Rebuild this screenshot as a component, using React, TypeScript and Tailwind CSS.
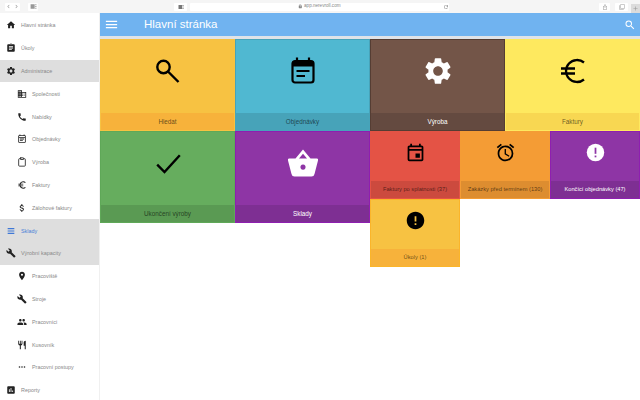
import React from 'react';
import {
  MdHome, MdAssignment, MdSettings, MdBusiness, MdCall, MdOutlineEventNote, MdEuroSymbol, MdAttachMoney,
  MdViewHeadline, MdBuild, MdPlace, MdPeople, MdRestaurant, MdMoreHoriz, MdAssessment, MdMenu, MdSearch,
  MdOutlineEvent, MdOutlineAccessAlarm, MdError, MdChevronLeft, MdChevronRight,
  MdRefresh, MdAdd, MdIosShare, MdFilterNone, MdViewSidebar, MdLock,
} from 'react-icons/md';
import { LuClipboard } from 'react-icons/lu';

const navItems = [
  { label: 'Hlavní stránka', icon: MdHome },
  { label: 'Úkoly', icon: MdAssignment },
  { label: 'Administrace', icon: MdSettings, active: true },
  { label: 'Společnosti', icon: MdBusiness, sub: true },
  { label: 'Nabídky', icon: MdCall, sub: true },
  { label: 'Objednávky', icon: MdOutlineEventNote, sub: true },
  { label: 'Výroba', icon: LuClipboard, sub: true },
  { label: 'Faktury', icon: MdEuroSymbol, sub: true },
  { label: 'Zálohové faktury', icon: MdAttachMoney, sub: true },
  { label: 'Sklady', icon: MdViewHeadline, active: true, blue: true },
  { label: 'Výrobní kapacity', icon: MdBuild, active: true },
  { label: 'Pracoviště', icon: MdPlace, sub: true },
  { label: 'Stroje', icon: MdBuild, sub: true },
  { label: 'Pracovníci', icon: MdPeople, sub: true },
  { label: 'Kusovník', icon: MdRestaurant, sub: true },
  { label: 'Pracovní postupy', icon: MdMoreHoriz, sub: true },
  { label: 'Reporty', icon: MdAssessment },
];

type IconProps = { className?: string };

const SearchIcon = ({ className }: IconProps) => (
  <svg viewBox="0 0 32 32" className={className} fill="none" stroke="currentColor" strokeWidth="2.4">
    <circle cx="11.5" cy="12" r="6.2" />
    <path d="M16 16.5 26.5 27" />
  </svg>
);

const NoteIcon = ({ className }: IconProps) => (
  <svg viewBox="0 0 32 32" className={className} fill="none" stroke="currentColor" strokeWidth="2.2">
    <rect x="5.5" y="6" width="21" height="21.5" rx="2.5" />
    <path d="M5.5 9h21" strokeWidth="5" />
    <path d="M10 2.5v5M22 2.5v5M9.5 16h13M9.5 21h8.5" />
  </svg>
);

const EuroIcon = ({ className }: IconProps) => (
  <svg viewBox="0 0 32 32" className={className} fill="none" stroke="currentColor" strokeWidth="2.3">
    <path d="M27 7.5A11 11 0 1 0 27 24.5M4 13.5h14M4 18.5h14" />
  </svg>
);

const CheckIcon = ({ className }: IconProps) => (
  <svg viewBox="0 0 32 32" className={className} fill="none" stroke="currentColor" strokeWidth="2.4">
    <path d="M5.2 17.7 12.5 25 27.8 8.3" />
  </svg>
);

const BasketIcon = ({ className }: IconProps) => (
  <svg viewBox="0 0 32 32" className={className} fill="currentColor" fillRule="evenodd">
    <path d="M16 2.5 23.5 11.5H30Q31.5 11.5 31 13.5L27.5 27Q27 29.5 24.5 29.5H7.5Q5 29.5 4.5 27L1 13.5Q.5 11.5 2 11.5H8.5ZM16 6.8 12 11.5H20ZM16 17.5a2.6 2.6 0 1 0 .01 0Z" />
  </svg>
);

const AlertWhite = ({ className }: IconProps) => (
  <svg viewBox="0 0 24 24" className={className}>
    <circle cx="12" cy="12" r="10" fill="#fff" />
    <rect x="11" y="6.5" width="2" height="7" fill="#8e35a5" />
    <rect x="11" y="15.5" width="2" height="2" fill="#8e35a5" />
  </svg>
);

type TileProps = {
  label: string;
  icon: React.ComponentType<IconProps>;
  bg: string;
  band: string;
  small?: boolean;
  light?: boolean;
};

const Tile = ({ label, icon: Icon, bg, band, small, light }: TileProps) => (
  <div className={`flex flex-col border-[0.5px] ${bg} ${small ? 'h-[68px] w-[90px]' : 'h-[92px] w-[135px]'}`}>
    <div className={`flex flex-1 items-center justify-center ${small ? 'pb-[9px]' : 'pb-[12px]'}`}>
      <Icon
        className={`${small ? 'h-[21px] w-[21px]' : 'h-[32px] w-[32px]'} ${light ? 'text-white' : 'text-black'}`}
      />
    </div>
    <div
      className={`flex h-[17px] items-center justify-center ${band} ${small ? 'text-[5.7px]' : 'text-[6.3px]'} ${
        light ? 'text-white' : 'text-black/60'
      }`}
    >
      {label}
    </div>
  </div>
);

export default function App() {
  return (
    <div className="flex h-[400px] w-[640px] flex-col overflow-hidden bg-white font-['Liberation_Sans',sans-serif]">
      {/* Safari toolbar */}
      <div className="flex h-[13px] items-center bg-[#f5f5f5] text-[#999]">
        <div className="ml-[5px] flex h-[8px] w-[15px] items-center justify-between rounded-[1px] bg-white">
          <MdChevronLeft className="text-[7px]" />
          <MdChevronRight className="text-[7px]" />
        </div>
        <div className="ml-[8px] flex h-[8px] w-[10px] items-center justify-center rounded-[1px] bg-white">
          <MdViewSidebar className="text-[7px]" />
        </div>
        <div className="ml-[136px] flex h-[8px] w-[13px] items-center justify-center rounded-[1px] bg-white">
          <MdViewSidebar className="text-[6px] text-[#777]" />
        </div>
        <div className="relative ml-[3px] flex h-[8px] w-[259px] items-center justify-center gap-[1px] rounded-[1px] bg-white text-[4.6px] text-[#888]">
          <MdLock />
          <span>app.nerevroll.com</span>
          <MdRefresh className="absolute right-[0.5px] text-[6px]" />
        </div>
        <div className="ml-[150px] flex h-[8px] w-[11px] items-center justify-center rounded-[1px] bg-white">
          <MdIosShare className="text-[6px]" />
        </div>
        <div className="ml-[5px] flex h-[8px] w-[13px] items-center justify-center rounded-[1px] bg-white">
          <MdFilterNone className="text-[6px]" />
        </div>
        <div className="ml-auto flex h-[9px] w-[9px] items-center justify-center self-end bg-[#dcdcdc]">
          <MdAdd className="text-[7px]" />
        </div>
      </div>
      <div className="flex min-h-0 flex-1">
        {/* Sidebar */}
        <aside className="w-[100px] flex-none overflow-hidden border-r border-[#f0f0f0] pt-[1px]">
          {navItems.map(({ label, icon: Icon, sub, active, blue }) => (
            <div
              key={label}
              className={`flex h-[22.8px] items-center ${sub ? 'pl-[17px]' : 'pl-[6px]'} ${active ? 'bg-[#dedede]' : ''}`}
            >
              <Icon className={`w-[10px] flex-none text-[10px] ${blue ? 'text-[#3f78d6]' : 'text-[#222]'}`} />
              <span className={`ml-[5px] text-[5.4px] whitespace-nowrap ${blue ? 'text-[#4a7fd8]' : 'text-[#888]'}`}>
                {label}
              </span>
            </div>
          ))}
        </aside>
        <main className="min-w-0 flex-1">
          <header className="flex h-[23px] items-center bg-[#70b3f0] text-white">
            <MdMenu className="ml-[4px] text-[15px]" />
            <h1 className="ml-[25px] pt-[1px] text-[11.5px] font-normal">Hlavní stránka</h1>
            <MdSearch className="ml-auto mr-[4px] text-[12px]" />
          </header>
          <div className="h-[3px] bg-[#dfe3e8]" />
          <div className="flex">
            <Tile label="Hledat" icon={SearchIcon} bg="bg-[#f7c242] border-[#f7c242]" band="bg-[#f7b23b]" />
            <Tile label="Objednávky" icon={NoteIcon} bg="bg-[#50b8d1] border-[#47a3b9]" band="bg-[#47a3b9]" />
            <Tile label="Výroba" icon={MdSettings} bg="bg-[#735548] border-[#553d33]" band="bg-[#644a40]" light />
            <Tile label="Faktury" icon={EuroIcon} bg="bg-[#fee95f] border-[#fee95f]" band="bg-[#f8d752]" />
          </div>
          <div className="flex">
            <Tile label="Ukončení výroby" icon={CheckIcon} bg="bg-[#66ad5e] border-[#5fa858]" band="bg-[#5a9a53]" />
            <Tile label="Sklady" icon={BasketIcon} bg="bg-[#8e35a5] border-[#8e1fb0]" band="bg-[#7e2f93]" light />
            <div className="flex w-[270px] flex-wrap content-start">
              <Tile small label="Faktury po splatnosti (37)" icon={MdOutlineEvent} bg="bg-[#e45345] border-[#e45345]" band="bg-[#cc4a3e]" />
              <Tile small label="Zakázky před termínem (130)" icon={MdOutlineAccessAlarm} bg="bg-[#f49c35] border-[#f49c35]" band="bg-[#dd8d30]" />
              <Tile small label="Končící objednávky (47)" icon={AlertWhite} bg="bg-[#8e35a5] border-[#8e1fb0]" band="bg-[#7e2f93]" light />
              <Tile small label="Úkoly (1)" icon={MdError} bg="bg-[#f7c242] border-[#fbb52a]" band="bg-[#f7b23b]" />
            </div>
          </div>
        </main>
      </div>
    </div>
  );
}
